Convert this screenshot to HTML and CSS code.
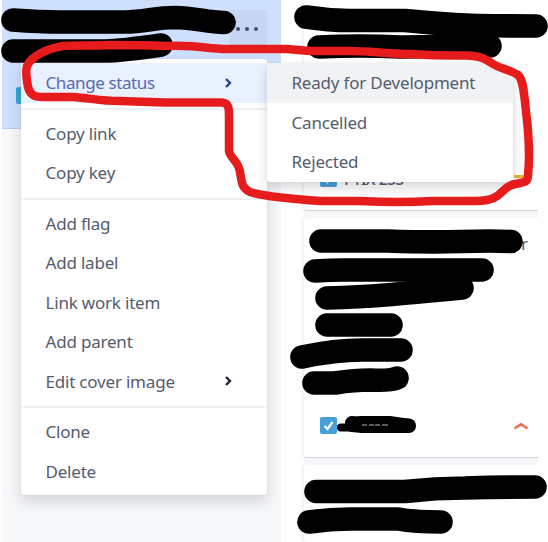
FILE: index.html
```html
<!DOCTYPE html>
<html lang="en">
<head>
<meta charset="utf-8">
<title>Board</title>
<link rel="stylesheet" href="styles.css">
</head>
<body>
<main class="board">
  <section class="column column-left">
    <article class="card-selected">
      <button class="more" aria-label="More"><i></i><i></i><i></i></button>
      <span class="type-edge"></span>
    </article>
  </section>
  <section class="column column-right">
    <article class="card card-first">
      <div class="card-foot">
        <svg class="check" viewBox="0 0 17 17"><rect width="17" height="17" rx="2"/><path d="M4.500 9l3 3 5-7"/></svg>
        <span class="key">PTIX-253</span>
        <span class="medium"></span>
      </div>
    </article>
    <article class="card card-second">
      <span class="title-end">r</span>
      <div class="card-foot">
        <svg class="check" viewBox="0 0 17 17"><rect width="17" height="17" rx="2"/><path d="M4.500 9l3 3 5-7"/></svg>
        <svg class="high" viewBox="0 0 16 8"><path d="M1.500 6.500L8 2.200L14.500 6.500"/></svg>
      </div>
    </article>
    <article class="card card-third"></article>
  </section>
</main>

<nav class="menu">
  <div class="group">
    <div class="item active"><span>Change status</span><svg class="chev" viewBox="0 0 8 12"><path d="M2 2l4 4-4 4"/></svg></div>
  </div>
  <div class="group">
    <div class="item">Copy link</div>
    <div class="item">Copy key</div>
  </div>
  <div class="group">
    <div class="item">Add flag</div>
    <div class="item">Add label</div>
    <div class="item">Link work item</div>
    <div class="item">Add parent</div>
    <div class="item"><span>Edit cover image</span><svg class="chev" viewBox="0 0 8 12"><path d="M2 2l4 4-4 4"/></svg></div>
  </div>
  <div class="group">
    <div class="item">Clone</div>
    <div class="item">Delete</div>
  </div>
</nav>

<nav class="submenu">
  <div class="item hover">Ready for Development</div>
  <div class="item">Cancelled</div>
  <div class="item">Rejected</div>
</nav>

<svg class="markup" viewBox="0 0 548 542">
  <g class="redact">
    <path d="M13 20Q40 22 60 22H125C145 22 155 17.500 175 17.500C195 18 207 22 224 22.500"/>
    <path d="M13 51H105Q120 51 161 45"/>
    <path d="M306 17C325 20 335 20.500 350 20.500H405Q430 23 455 24.500T536 26"/>
    <path d="M319 47Q360 45 400 47L490 46"/>
    <path d="M321 241H388Q430 242.500 461 241.500T511 241.500"/>
    <path d="M315 271Q330 270 345 270H482"/>
    <path d="M327 298Q360 297 385 295T462 288"/>
    <path d="M327 325H391"/>
    <path d="M302 357Q335 350 362 350H401"/>
    <path d="M314 383H335Q355 380 370 380Q390 381 397 378"/>
    <path d="M316 491.500H405Q435 488 465 488Q500 487 535 487"/>
    <path d="M309 522Q330 519 350 519H398Q415 522 441 522"/>
  </g>
  <path class="scribble" d="M341 427.500H350"/>
  <path class="scribble wide" d="M352 423Q356 423.500 361 423H389Q400 425 409 425.500M352 425L362 426H402L409 426"/>
  <path class="specks" d="M362 425h5m2 0h5m1 0h5m2 0h6"/>
  <path class="lasso" d="M210 48Q185 45 165 46C145 45 130 45 110 45C90 46 73 45 63 46C45 49 31 57 27 66C25 73 27 80 28 87C30 94 33 97 43 97H73C90 98 100 101 120 101L165 102.500H222C229 103 229 108 229 117V151C230 158 239 162 240 172C242 184 242 188 250 192C270 198 300 199 320 201H360Q400 203 432 201H475C505 201 499 187 515 184C526 182 528 182 528 175C530 157 529 140 527 120C524 96 524 80 518 75C508 69 501 69 493 64C484 58 480 56 466 55.500C440 56 425 55 410 54C390 54 370 51 350 51H310L287 49H223L210 48Z"/>
</svg>
</body>
</html>
```

FILE: styles.css
```css
* { box-sizing: border-box; }

body {
  margin: 0;
  width: 548px;
  height: 542px;
  overflow: hidden;
  position: relative;
  background: #fff;
  color: #555b6e;
  font: 17px/1 "Noto Sans", sans-serif;
}

.board {
  display: flex;
  gap: 23px;
  height: 542px;
  padding-left: 2px;
}

.column-left {
  width: 279px;
  background: #f7f8fa;
}

.card-selected {
  position: relative;
  height: 129px;
  padding: 10px 8px 0 0;
  background: #cfe0fe;
  border-bottom: 1px solid #b8cdf2;
}

.more {
  display: flex;
  align-items: center;
  justify-content: center;
  gap: 5px;
  width: 38px;
  height: 38px;
  margin-left: auto;
  padding: 0 3px 1px 0;
  border: 0;
  border-radius: 3px;
  background: #c5d5f3;
}

.card-selected .more { margin-right: 6px; }

.more i {
  width: 4px;
  height: 4px;
  border-radius: 50%;
  background: #43506c;
}

.type-edge {
  position: absolute;
  left: 14px;
  top: 87px;
  width: 8px;
  height: 17px;
  border-radius: 2px;
  background: #35a7dc;
}

.column-right {
  display: flex;
  flex-direction: column;
  gap: 7px;
  width: 234px;
  background: #f8f8fa;
}

.card {
  display: flex;
  flex-direction: column;
  justify-content: flex-end;
  background: #fff;
  border-bottom: 1px solid #d5d6da;
  border-radius: 3px 0 0 3px;
  box-shadow: -2px 0 3px #f0f0f3;
}

.card-first { height: 211px; padding-bottom: 23px; }

.card-second {
  height: 240px;
  padding-bottom: 23px;
  justify-content: space-between;
}

.card-third { flex: 1; border-bottom: 0; }

.card-foot {
  display: flex;
  align-items: center;
  padding: 0 9px 0 16px;
}

.check { width: 17px; height: 17px; }
.check rect { fill: #459fd9; }
.check path { fill: none; stroke: #fff; stroke-width: 2.2; }

.key {
  margin-left: 7px;
  font-size: 16px;
  font-weight: 500;
  letter-spacing: -.9px;
}

.medium {
  width: 17px;
  height: 3px;
  margin: 0 -2px 5px auto;
  background: #edb034;
}

.high { width: 16px; height: 8px; margin-left: auto; }
.high path { fill: none; stroke: #f26b50; stroke-width: 2.5; }

.title-end {
  align-self: flex-end;
  margin: 17px 10px 0 0;
}

.menu, .submenu {
  position: absolute;
  background: #fff;
  border-radius: 3px;
}

.menu {
  left: 21px;
  top: 59px;
  width: 246px;
  padding: 4px 0;
  box-shadow: 0 7px 14px rgba(30, 35, 50, .17), 0 0 2px rgba(30, 35, 50, .1);
}

.submenu {
  left: 267px;
  top: 63px;
  width: 246px;
  box-shadow: 0 6px 12px rgba(30, 35, 50, .17), 0 0 2px rgba(30, 35, 50, .08);
}

.group + .group {
  margin-top: 5px;
  padding-top: 4px;
  border-top: 2px solid #eff0f2;
}

.item {
  display: flex;
  align-items: center;
  justify-content: space-between;
  height: 39.5px;
  padding: 0 35px 0 24.5px;
  white-space: nowrap;
  letter-spacing: -.2px;
}

.active { background: #e9f0fe; color: #5869b3; letter-spacing: -.4px; }
.hover { background: #f1f2f4; }

.chev { width: 8px; height: 12px; }
.chev path { fill: none; stroke: #20242e; stroke-width: 2.4; }
.active .chev path { stroke: #27439b; }

.markup {
  position: absolute;
  inset: 0;
  width: 548px;
  height: 542px;
}

.markup path {
  fill: none;
  stroke-linecap: round;
  stroke-linejoin: round;
}

.redact path { stroke: #000; stroke-width: 23.6px; }
.scribble { stroke: #000; stroke-width: 8px; }
.wide { stroke-width: 14px; }
.markup .specks { stroke: #b5b5bb; stroke-width: 1px; stroke-linecap: butt; }
.lasso { stroke: #e61c1c; stroke-width: 8.5px; }
```
